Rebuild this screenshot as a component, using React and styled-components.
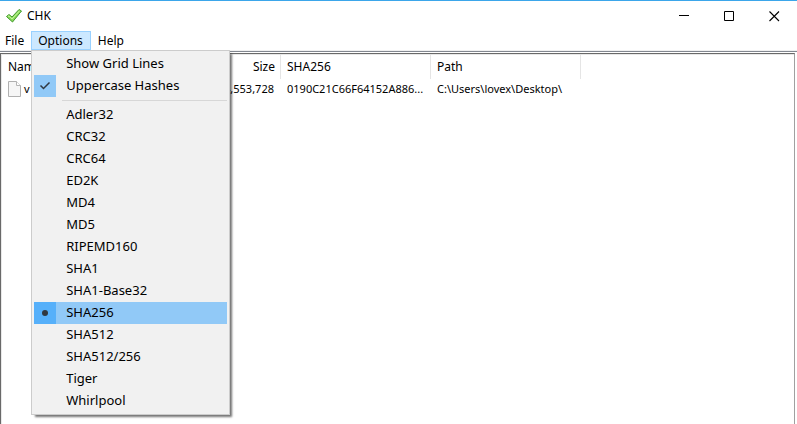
import React, { useState } from "react";
import styled, { createGlobalStyle } from "styled-components";

const GlobalStyle = createGlobalStyle`
  *, *::before, *::after { box-sizing: border-box; }
  body {
    margin: 0;
    background: #fff;
    color: #000;
    font-family: "Noto Sans", "Open Sans", sans-serif;
    font-size: 12px;
    overflow: hidden;
  }
  button, input { font: inherit; color: inherit; margin: 0; }
`;

const Window = styled.div`
  display: flex;
  flex-direction: column;
  height: 100vh;
  border-top: 1px solid #3ba6ea;
`;

const TitleBar = styled.header`
  display: flex;
  align-items: center;
  height: 30px;
  padding-left: 5px;
`;

const Title = styled.h1`
  flex: 1;
  margin: 0 0 0 4px;
  font-size: 12px;
  line-height: 16px;
  font-weight: 400;
`;

const WindowButton = styled.button`
  display: grid;
  place-items: center;
  width: 45px;
  height: 28px;
  padding: 0;
  border: 0;
  background: none;
`;

const MenuBar = styled.nav`
  display: flex;
  height: 19px;
`;

const MenuSlot = styled.div`
  position: relative;
  display: flex;
`;

const MenuBarButton = styled.button`
  padding: 0 7px 0 6px;
  border: 1px solid ${(p) => (p.$open ? "#99d1ff" : "transparent")};
  background: ${(p) => (p.$open ? "#cce8ff" : "transparent")};
  line-height: 17px;
  white-space: nowrap;

  ${MenuBar} > &:first-child { padding: 0 6px 0 4px; }
`;

const Popup = styled.div`
  position: absolute;
  top: 100%;
  left: 0;
  z-index: 1;
  width: 199px;
  padding: 2px;
  border: 1px solid #ccc;
  background: #f1f1f1;
  box-shadow: 3px 3px 2px -1px rgba(0, 0, 0, 0.55);
`;

const MenuItem = styled.label`
  display: flex;
  align-items: flex-start;
  gap: 10px;
  height: 22px;
  background: ${(p) => (p.$active ? "#91c9f7" : "transparent")};
  font-size: 13px;
  line-height: 20px;
`;

const Gutter = styled.span`
  display: grid;
  place-items: center;
  width: 22px;
  height: 22px;
  background: ${(p) => p.$fill};
  > * { grid-area: 1 / 1; }
`;

const HiddenInput = styled.input`
  appearance: none;
  width: 22px;
  height: 22px;
`;

const Separator = styled.hr`
  height: 1px;
  margin: 3px 0 3px 28px;
  border: 0;
  background: #d7d7d7;
`;

const ListFrame = styled.main`
  flex: 1;
  margin-right: 2px;
  border: solid #696969;
  border-width: 1px 0 0 1px;
  border-right: 1px solid #a0a0a0;
  box-shadow: inset 1px 1px #e8e8e8;
`;

const Edge = styled.div`
  height: 2px;
  margin-bottom: 1px;
  border-top: 1px solid #f0f0f0;
  border-bottom: 1px solid #828790;
`;

const FileTable = styled.table`
  table-layout: fixed;
  width: 580px;
  border-collapse: separate;
  border-spacing: 0;
  white-space: nowrap;
`;

const HeadCell = styled.th`
  height: 25px;
  padding: 0 5px 0 6px;
  border-right: 1px solid #e5e5e5;
  font-weight: 400;
  text-align: ${(p) => p.$align || "left"};

  &:first-child { padding-left: 7px; }
`;

const Cell = styled.td`
  height: 19px;
  padding: 0 7px 0 6px;
  font-size: 11px;
  text-align: ${(p) => p.$align || "left"};

  &:first-child { padding-left: 7px; }
`;

const FileName = styled.span`
  display: flex;
  align-items: center;
  gap: 2px;
`;

const CheckLogo = () => (
  <svg width="18" height="18" viewBox="0 0 18 18" aria-hidden="true">
    <path d="M1.5 9.5 4 7.5l3 2.5 7-7.5L16.5 4 7.5 15z" fill="#8cdc5a" stroke="#3f982b" strokeLinejoin="round" />
    <path d="m3 9.5 1-.7L7 12l7.7-8.3" fill="none" stroke="#c6f5a0" />
  </svg>
);

const MinimizeIcon = () => (
  <svg width="11" height="11" viewBox="0 0 11 11" shapeRendering="crispEdges" aria-hidden="true">
    <path d="M0 4.5h10" stroke="#000" />
  </svg>
);

const MaximizeIcon = () => (
  <svg width="11" height="11" viewBox="0 0 11 11" aria-hidden="true">
    <path d="M.5.5h9v9h-9z" fill="none" stroke="#000" />
  </svg>
);

const CloseIcon = () => (
  <svg width="11" height="11" viewBox="0 0 11 11" aria-hidden="true">
    <path d="m.5.5 9.5 9.5m0-9.5L.5 10" stroke="#000" strokeWidth="1.1" />
  </svg>
);

const TickIcon = () => (
  <svg width="12" height="10" viewBox="0 0 12 10" aria-hidden="true">
    <path d="m1.5 4.5 3 3 6-6" fill="none" stroke="#303840" strokeWidth="1.5" />
  </svg>
);

const BulletIcon = () => (
  <svg width="8" height="8" viewBox="0 0 8 8" aria-hidden="true">
    <circle cx="4" cy="4" r="3" fill="#303840" />
  </svg>
);

const PageIcon = () => (
  <svg width="14" height="16" viewBox="0 0 14 16" aria-hidden="true">
    <path d="M.5.5h8l4 4v11H.5z" fill="#f6f6f6" stroke="#b0b0b0" />
    <path d="M8.5.5v4h4" fill="#fff" stroke="#b5b5b5" />
  </svg>
);

const ALGORITHMS = [
  "Adler32", "CRC32", "CRC64", "ED2K", "MD4", "MD5", "RIPEMD160",
  "SHA1", "SHA1-Base32", "SHA256", "SHA512", "SHA512/256", "Tiger", "Whirlpool",
];

function CheckItem({ label, checked, onChange }) {
  return (
    <MenuItem>
      <Gutter $fill={checked ? "#91c9f7" : "transparent"}>
        <HiddenInput type="checkbox" checked={checked} onChange={onChange} />
        {checked && <TickIcon />}
      </Gutter>
      {label}
    </MenuItem>
  );
}

function RadioItem({ label, checked, onChange }) {
  return (
    <MenuItem $active={checked}>
      <Gutter $fill={checked ? "#56b0fa" : "transparent"}>
        <HiddenInput type="radio" name="algorithm" checked={checked} onChange={onChange} />
        {checked && <BulletIcon />}
      </Gutter>
      {label}
    </MenuItem>
  );
}

export default function App() {
  const [open, setOpen] = useState(true);
  const [grid, setGrid] = useState(false);
  const [upper, setUpper] = useState(true);
  const [algorithm, setAlgorithm] = useState("SHA256");

  return (
    <>
      <GlobalStyle />
      <Window>
        <TitleBar>
          <CheckLogo />
          <Title>CHK</Title>
          <WindowButton aria-label="Minimize"><MinimizeIcon /></WindowButton>
          <WindowButton aria-label="Maximize"><MaximizeIcon /></WindowButton>
          <WindowButton aria-label="Close"><CloseIcon /></WindowButton>
        </TitleBar>
        <MenuBar>
          <MenuBarButton>File</MenuBarButton>
          <MenuSlot>
            <MenuBarButton $open={open} aria-expanded={open} onClick={() => setOpen(!open)}>
              Options
            </MenuBarButton>
            {open && (
              <Popup>
                <CheckItem label="Show Grid Lines" checked={grid} onChange={() => setGrid(!grid)} />
                <CheckItem label="Uppercase Hashes" checked={upper} onChange={() => setUpper(!upper)} />
                <Separator />
                {ALGORITHMS.map((name) => (
                  <RadioItem
                    key={name}
                    label={name}
                    checked={name === algorithm}
                    onChange={() => setAlgorithm(name)}
                  />
                ))}
              </Popup>
            )}
          </MenuSlot>
          <MenuBarButton>Help</MenuBarButton>
        </MenuBar>
        <Edge />
        <ListFrame>
          <FileTable>
            <colgroup>
              <col width="180" />
              <col width="100" />
              <col width="150" />
              <col width="150" />
            </colgroup>
            <thead>
              <tr>
                <HeadCell>Name</HeadCell>
                <HeadCell $align="right">Size</HeadCell>
                <HeadCell>SHA256</HeadCell>
                <HeadCell>Path</HeadCell>
              </tr>
            </thead>
            <tbody>
              <tr>
                <Cell><FileName><PageIcon />v</FileName></Cell>
                <Cell $align="right">4,553,728</Cell>
                <Cell>0190C21C66F64152A886...</Cell>
                <Cell>C:\Users\lovex\Desktop\</Cell>
              </tr>
            </tbody>
          </FileTable>
        </ListFrame>
      </Window>
    </>
  );
}
